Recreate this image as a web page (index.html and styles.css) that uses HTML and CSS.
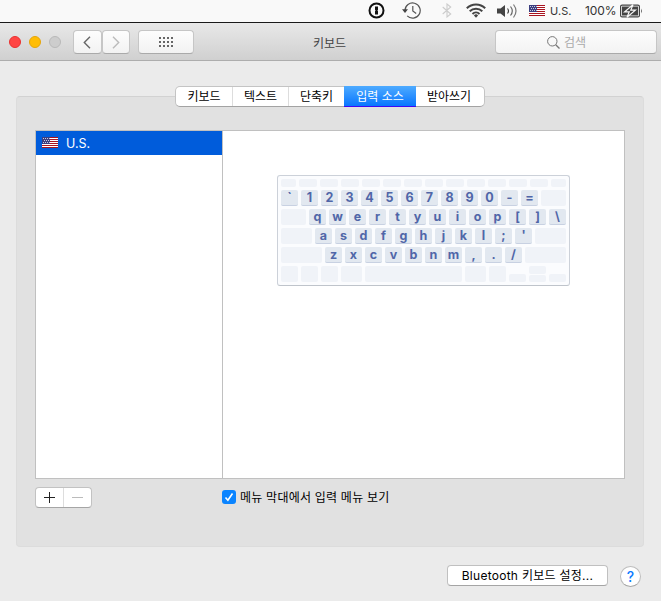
FILE: index.html
```html
<!DOCTYPE html>
<html lang="ko">
<head>
<meta charset="utf-8">
<title>키보드</title>
<link rel="stylesheet" href="styles.css">
</head>
<body>
<svg width="0" height="0" class="defs" aria-hidden="true">
  <symbol id="flag" viewBox="0 0 16 11">
    <rect width="16" height="11" fill="#fff"/>
    <path d="M0 .5h16M0 2.5h16M0 4.5h16M0 6.5h16M0 8.5h16M0 10.5h16" stroke="#a81420"/>
    <rect width="8" height="7" fill="#3c3f80"/>
    <path d="M1 1.5h7M2 3.5h6M1 5.5h7" stroke="#c9cae0" stroke-dasharray="1 1"/>
  </symbol>
</svg>
<header class="menubar">
  <svg class="m-pass" width="17" height="17" viewBox="0 0 17 17"><circle cx="8.5" cy="8.5" r="7" fill="none" stroke="#111" stroke-width="2"/><path d="M7 4.5h3v3.2l-.6.8.6.8v3.2H7V9.3l.6-.8-.6-.8z" fill="#111"/></svg>
  <svg class="m-time" width="20" height="17" viewBox="0 0 20 17"><path d="M3 8.5a7.6 7.6 0 1 1 2.2 5.4M10.8 4v5l3.4 2.4" fill="none" stroke="#555" stroke-width="1.2"/><path d="M0 7.3h6L3 11z" fill="#444"/></svg>
  <svg class="m-bt" width="10" height="15" viewBox="0 0 10 15"><path d="M.7 4l8 7L5 14V1l3.700 3-8 7" fill="none" stroke="#ccc" stroke-width="1.1"/></svg>
  <svg class="m-wifi" width="20" height="15" viewBox="0 0 20 15"><g fill="none" stroke="#444" stroke-width="2"><path d="M.8 5.200a13 13 0 0 1 18.400 0M3.700 8.200a9 9 0 0 1 12.600 0M6.500 11a5 5 0 0 1 7 0"/></g><path d="M7.900 12.400a3 3 0 0 1 4.200 0L10 14.700z" fill="#444"/></svg>
  <svg class="m-vol" width="21" height="16" viewBox="0 0 21 16"><path d="M0 5.500h3.500L8 2v12l-4.500-3.500H0z" fill="#444"/><g fill="none" stroke="#444" stroke-width="1.2"><path d="M10.500 5.500q2 2.500 0 5"/><path d="M13.500 3.500q3.600 4.500 0 9" stroke="#666"/><path d="M16.500 1.500q5 6.500 0 13" stroke="#777"/></g></svg>
  <svg class="m-flag" width="16" height="11"><use href="#flag"/></svg>
  <span class="m-us">U.S.</span>
  <span class="m-pct">100%</span>
  <svg class="m-bat" width="23" height="14" viewBox="0 0 23 14"><rect x=".6" y="1.100" width="18.800" height="11.800" rx="1.500" fill="#f9f9f9" stroke="#444" stroke-width="1.200"/><rect x="2" y="2.500" width="16" height="9" fill="#444"/><path d="M13 .8L4.600 7.900h4.600L7 13.200l8.400-7.100h-4.600z" fill="#444" stroke="#f9f9f9" stroke-width="1.200"/><path d="M21 4.500q1.700 2.500 0 5z" fill="#444"/></svg>
</header>
<div class="toolbar">
  <i class="light red"></i><i class="light yellow"></i><i class="light off"></i>
  <div class="nav">
    <span class="tbtn"><svg width="8" height="13" viewBox="0 0 8 13"><path d="M7 .8L1.300 6.500 7 12.200" fill="none" stroke="#666" stroke-width="1.400"/></svg></span>
    <span class="tbtn"><svg width="8" height="13" viewBox="0 0 8 13"><path d="M1 .8l5.700 5.700L1 12.200" fill="none" stroke="#bbb" stroke-width="1.400"/></svg></span>
  </div>
  <span class="tbtn grid"><svg width="14" height="10"><path d="M0 1h14M0 5h14M0 9h14" stroke="#666" stroke-width="2" stroke-dasharray="2 2"/></svg></span>
  <h1>키보드</h1>
  <div class="search"><svg width="13" height="13" viewBox="0 0 13 13"><circle cx="5.300" cy="5.300" r="4.700" fill="none" stroke="#777"/><path d="M8.700 8.700L12.500 12.500" stroke="#777" stroke-width="1.300"/></svg><span>검색</span></div>
</div>
<main class="panel">
  <nav class="tabs"><span class="t1">키보드</span><span class="t2">텍스트</span><span class="t3">단축키</span><span class="t4 active">입력 소스</span><span class="t5">받아쓰기</span></nav>
  <section class="sources">
    <div class="list"><div class="item"><svg width="16" height="11"><use href="#flag"/></svg><span>U.S.</span></div></div>
    <div class="preview">
      <div class="keyboard">
        <div class="row fn"><i class="w15"></i><i></i><i></i><i></i><i></i><i></i><i></i><i></i><i></i><i></i><i></i><i></i><i></i><i class="w15"></i></div>
        <div class="row"><b>`</b><b>1</b><b>2</b><b>3</b><b>4</b><b>5</b><b>6</b><b>7</b><b>8</b><b>9</b><b>0</b><b>-</b><b>=</b><i class="grow"></i></div>
        <div class="row"><i class="grow"></i><b>q</b><b>w</b><b>e</b><b>r</b><b>t</b><b>y</b><b>u</b><b>i</b><b>o</b><b>p</b><b>[</b><b>]</b><b>\</b></div>
        <div class="row"><i class="grow"></i><b>a</b><b>s</b><b>d</b><b>f</b><b>g</b><b>h</b><b>j</b><b>k</b><b>l</b><b>;</b><b>'</b><i class="grow"></i></div>
        <div class="row"><i class="grow"></i><b>z</b><b>x</b><b>c</b><b>v</b><b>b</b><b>n</b><b>m</b><b>,</b><b>.</b><b>/</b><i class="grow"></i></div>
        <div class="row"><i></i><i></i><i></i><i class="w21"></i><i class="grow"></i><i class="w21"></i><i></i><i class="half"></i><span class="updown"><i></i><i></i></span><i class="half"></i></div>
      </div>
    </div>
  </section>
  <div class="below">
    <div class="addremove"><span><svg width="11" height="11"><path d="M0 5.500h11M5.500 0v11" stroke="#222"/></svg></span><span><svg width="11" height="11"><path d="M0 5.500h11" stroke="#bbb"/></svg></span></div>
    <div class="option"><span class="check"><svg width="14" height="14" viewBox="0 0 14 14"><path d="M3.500 7.500l2.400 2.800L10.500 3.500" fill="none" stroke="#fff" stroke-width="1.600"/></svg></span><span class="label">메뉴 막대에서 입력 메뉴 보기</span></div>
  </div>
</main>
<footer class="footer"><span class="btn"><span>Bluetooth 키보드 설정...</span></span><span class="help">?</span></footer>
</body>
</html>
```
FILE: styles.css
```css
* { box-sizing: border-box; }
body {
  margin: 0;
  width: 661px;
  height: 601px;
  overflow: hidden;
  background: #ebebeb;
  color: #000;
  font: 12px/16px Inter, "Noto Sans CJK KR", sans-serif;
  white-space: nowrap;
}
svg { display: block; flex: none; }
.defs { position: absolute; }

.menubar {
  display: flex;
  align-items: center;
  height: 23px;
  padding-left: 368px;
  background: #f9f9f9;
  border-bottom: 1px solid #1a1a1a;
  color: #333;
}
.m-pass, .m-time, .m-bt, .m-wifi, .m-vol, .m-flag { margin-top: -1px; }
.m-time { margin-left: 17px; }
.m-bt { margin-left: 20px; }
.m-wifi { margin-left: 14px; }
.m-vol { margin-left: 11px; }
.m-flag { margin-left: 11px; }
.m-us { width: 30px; margin-left: 5px; font-size: 11px; letter-spacing: .1px; }
.m-pct { width: 32px; margin-left: 5px; font-size: 12px; letter-spacing: -.1px; }
.m-bat { margin-left: 3px; }

.toolbar {
  display: flex;
  align-items: center;
  height: 38px;
  padding: 1px 4px 0 9px;
  background: linear-gradient(#e8e8e8, #d0d0d0);
  border-bottom: 1px solid #adadad;
}
.light { width: 12px; height: 12px; margin-right: 8px; border-radius: 50%; border: 1px solid; }
.red { background: #ff4544; border-color: #e9302f; }
.yellow { background: #ffbd05; border-color: #e5a50a; }
.off { background: #cdcdcd; border-color: #b9b9b9; }
.nav { display: flex; margin-left: 4px; }
.tbtn {
  display: flex;
  align-items: center;
  justify-content: center;
  width: 28px;
  height: 24px;
  border: 1px solid #c6c6c6;
  border-bottom-color: #aaa;
  border-radius: 4px;
  background: linear-gradient(#fdfdfd, #f2f2f2);
}
.nav .tbtn:first-child { width: 29px; padding-right: 1px; }
.nav .tbtn:last-child { padding-right: 1px; }
.grid { width: 56px; margin-left: 8px; }
h1 { width: 36px; margin: 0 0 0 119px; padding-top: 3px; color: #444; font-size: 12px; line-height: 16px; font-weight: 400; }
.search {
  display: flex;
  align-items: center;
  width: 162px;
  height: 24px;
  margin-left: auto;
  padding-left: 51px;
  gap: 4px;
  border: 1px solid #c6c6c6;
  border-bottom-color: #aaa;
  border-radius: 4px;
  background: linear-gradient(#fdfdfd, #f3f3f3);
  color: #aaa;
}
.search span { padding-top: 1px; }

.panel {
  width: 628px;
  height: 451px;
  margin: 35px 0 0 16px;
  padding: 0 18px;
  border: 1px solid #dcdcdc;
  border-top-color: #d2d2d2;
  border-radius: 4px;
  background: #e1e1e1;
}
.tabs {
  display: flex;
  width: 310px;
  height: 21px;
  margin: -11px 0 0 140px;
  border: 1px solid #c4c4c4;
  border-bottom-color: #a3a3a3;
  border-radius: 5px;
  background: #fff;
}
.tabs span { height: 19px; text-align: center; line-height: 20px; border-right: 1px solid #ddd; }
.t1 { width: 57px; }
.t2 { width: 56px; }
.t3 { width: 55px; }
.t4 { width: 72px; }
.t5 { width: 68px; }
.tabs .t3, .tabs .t4, .tabs .t5 { border-right: 0; }
.tabs .t5 { padding-right: 2px; }
.tabs .active {
  height: 21px;
  margin-top: -1px;
  color: #fff;
  line-height: 22px;
  border-bottom: 1px solid #4009f2;
  background: linear-gradient(#4eabff, #0876ff);
}
.sources {
  display: flex;
  width: 590px;
  height: 349px;
  margin-top: 23px;
  border: 1px solid #c0c0c0;
  background: #fff;
}
.list { width: 187px; border-right: 1px solid #c0c0c0; }
.item {
  display: flex;
  align-items: center;
  gap: 8px;
  height: 24px;
  padding-left: 6px;
  background: #005cdb;
  color: #fff;
}
.item svg { margin-top: -1px; }
.item span { padding-top: 2px; font-size: 12.5px; }
.preview { flex: 1; padding: 44px 0 0 54px; }

.keyboard {
  display: flex;
  flex-direction: column;
  gap: 3px;
  width: 293px;
  height: 111px;
  padding: 3px;
  border: 1px solid #ccd1d9;
  border-bottom-color: #bfc4cb;
  border-radius: 3px;
  background: #fbfcfe;
}
.row { display: flex; gap: 3px; height: 16px; }
.row i, .row b { display: block; width: 17px; border-radius: 2px; background: #f0f3f8; }
.row b {
  height: 16px;
  background: #e2e8f0;
  border-bottom: 1px solid #c8d1e2;
  color: #5066a8;
  font: 700 12.5px/15px Inter, sans-serif;
  text-align: center;
}
.row.fn { height: 8px; }
.fn i { width: 18px; }
.row .w15 { width: 15px; }
.row .w21 { width: 21px; }
.row .grow { flex: 1; }
.row .half { height: 8px; align-self: flex-end; }
.updown { display: flex; flex-direction: column; gap: 1px; }
.updown i { flex: 1; }

.below { display: flex; margin-top: 8px; }
.addremove {
  display: flex;
  width: 57px;
  height: 21px;
  border: 1px solid #c2c2c2;
  border-bottom-color: #a5a5a5;
  border-radius: 4px;
  background: #fff;
}
.addremove span { display: flex; flex: 1; align-items: center; justify-content: center; }
.addremove span + span { border-left: 1px solid #ddd; }
.option { display: flex; align-items: center; gap: 4px; height: 20px; margin-left: 130px; }
.check { width: 14px; height: 14px; border-radius: 3px; background: #0a84ff; }
.label { padding-top: 1px; letter-spacing: .22px; }

.footer { display: flex; align-items: flex-start; gap: 12px; margin: 18px 0 0 447px; }
.btn {
  width: 161px;
  height: 21px;
  border: 1px solid #c0c0c0;
  border-bottom-color: #a5a5a5;
  border-radius: 4px;
  background: #fff;
  text-align: center;
  letter-spacing: .27px;
  line-height: 19px;
}
.help {
  width: 21px;
  height: 21px;
  margin-top: 1px;
  border: 1px solid #bdbdbd;
  border-bottom-color: #a5a5a5;
  border-radius: 50%;
  background: #fff;
  color: #0a7aff;
  font-size: 14px;
  font-weight: 500;
  line-height: 20px;
  text-align: center;
}
```
